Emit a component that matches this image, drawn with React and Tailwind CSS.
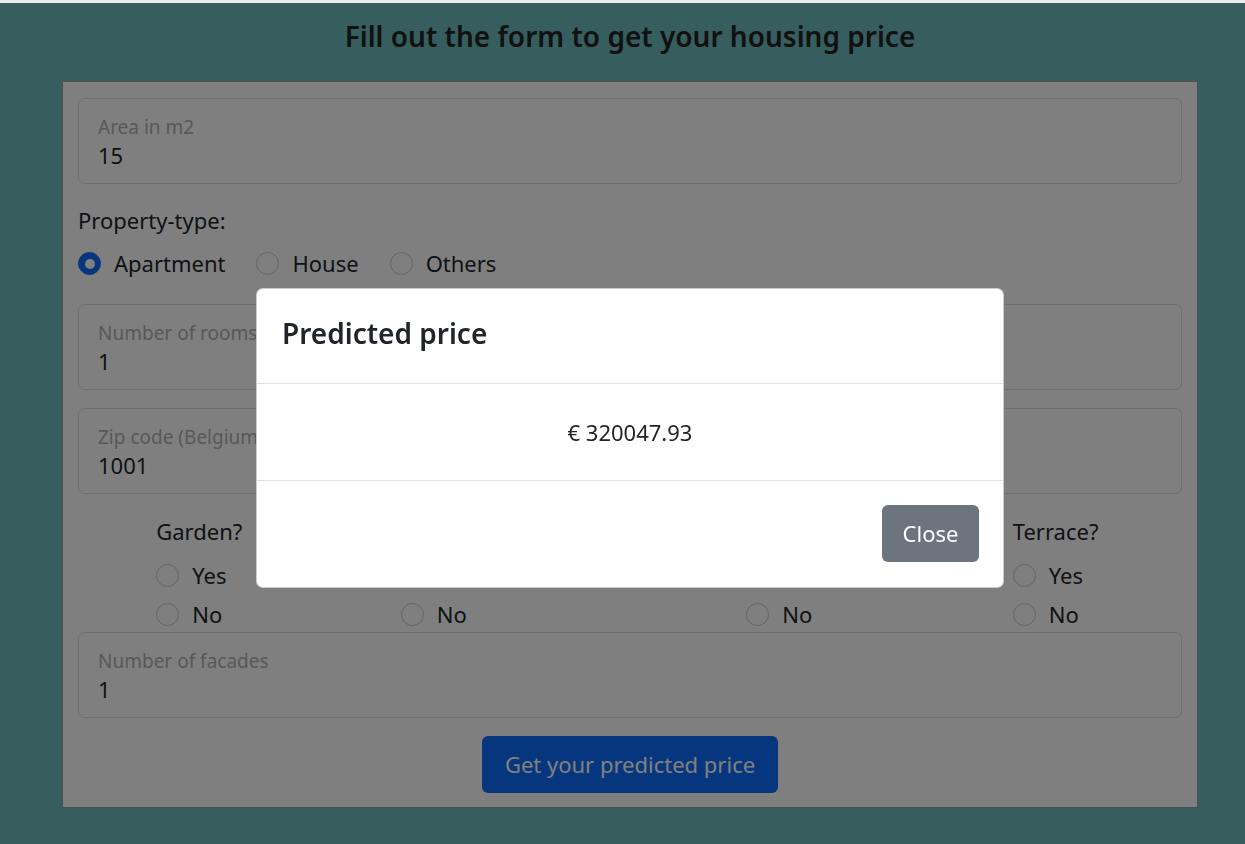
import React from 'react';

const Radio = ({ label, checked }) => (
  <label className="flex h-[39px] items-center gap-[13px] whitespace-nowrap">
    <span
      className={`flex h-[23px] w-[23px] shrink-0 items-center justify-center rounded-full border ${
        checked ? 'border-[#0d6efd] bg-[#0d6efd]' : 'border-[#c6c6c6] bg-white'
      }`}
    >
      {checked && <span className="h-[10px] w-[10px] rounded-full bg-white" />}
    </span>
    <span>{label}</span>
  </label>
);

const FloatingField = ({ label, value }) => (
  <div className="rounded-[6px] border border-[#dcdfe2] bg-white pb-[15px] pl-[19px] pt-[18px]">
    <div className="text-[19px] leading-[20px] text-[#b0b0b0]">{label}</div>
    <div className="mt-[5px] text-[22px] leading-[26px] text-[#212529]">{value}</div>
  </div>
);

const YesNo = ({ title, width }) => (
  <div className={width}>
    <div className="whitespace-nowrap leading-[33px]">{title}</div>
    <div className="mt-[8px]">
      <Radio label="Yes" />
      <Radio label="No" />
    </div>
  </div>
);

export default function App() {
  return (
    <div className="min-h-screen bg-[#6dbdbc] font-['Noto_Sans',sans-serif] text-[22px] text-[#212529]">
      <div className="h-[3px] bg-[#ececec]" />

      <div className="ml-[62px] w-[1136px]">
        {/* Header */}
        <h1 className="pt-[14px] text-center text-[28px] font-semibold leading-[38px] text-[#222]">
          Fill out the form to get your housing price
        </h1>

        {/* Form */}
        <form className="mt-[26px] border border-[#9c9c9c] bg-white px-[15px] pb-[14px] pt-[16px]">
          <FloatingField label="Area in m2" value="15" />

          <div className="mt-[20px] leading-[33px]">Property-type:</div>
          <div className="mt-[7px] flex gap-[31px]">
            <Radio label="Apartment" checked />
            <Radio label="House" />
            <Radio label="Others" />
          </div>

          <div className="mt-[21px]">
            <FloatingField label="Number of rooms" value="1" />
          </div>
          <div className="mt-[18px]">
            <FloatingField label="Zip code (Belgium)" value="1001" />
          </div>

          <div className="mt-[21px] flex justify-around pl-[-1px]">
            <YesNo title="Garden?" width="w-[88px]" />
            <YesNo title="Swimming pool?" width="w-[189px]" />
            <YesNo title="Furnished?" width="w-[110px]" />
            <YesNo title="Terrace?" width="w-[91px]" />
          </div>

          <div className="-mt-[2px]">
            <FloatingField label="Number of facades" value="1" />
          </div>

          <div className="mt-[18px] flex justify-center">
            <button
              type="button"
              className="flex h-[57px] w-[296px] items-center justify-center rounded-[6px] bg-[#0d6efd] text-white"
            >
              Get your predicted price
            </button>
          </div>
        </form>
      </div>

      {/* Backdrop */}
      <div className="fixed inset-x-0 bottom-0 top-[3px] bg-black/50" />

      {/* Modal */}
      <div className="fixed left-[256px] top-[288px] w-[748px] overflow-hidden rounded-[7px] border border-black/20 bg-white">
        <div className="border-b border-[#dee2e6] px-[25px] pb-[27px] pt-[22px]">
          <h5 className="text-[28px] font-semibold leading-[45px] text-[#212529]">Predicted price</h5>
        </div>
        <div className="border-b border-[#dee2e6] pb-[31px] pt-[32px] text-center leading-[33px]">
          € 320047.93
        </div>
        <div className="flex justify-end px-[24px] pb-[25px] pt-[24px]">
          <button
            type="button"
            className="flex h-[57px] w-[97px] items-center justify-center rounded-[6px] bg-[#6c757d] text-white"
          >
            Close
          </button>
        </div>
      </div>
    </div>
  );
}
